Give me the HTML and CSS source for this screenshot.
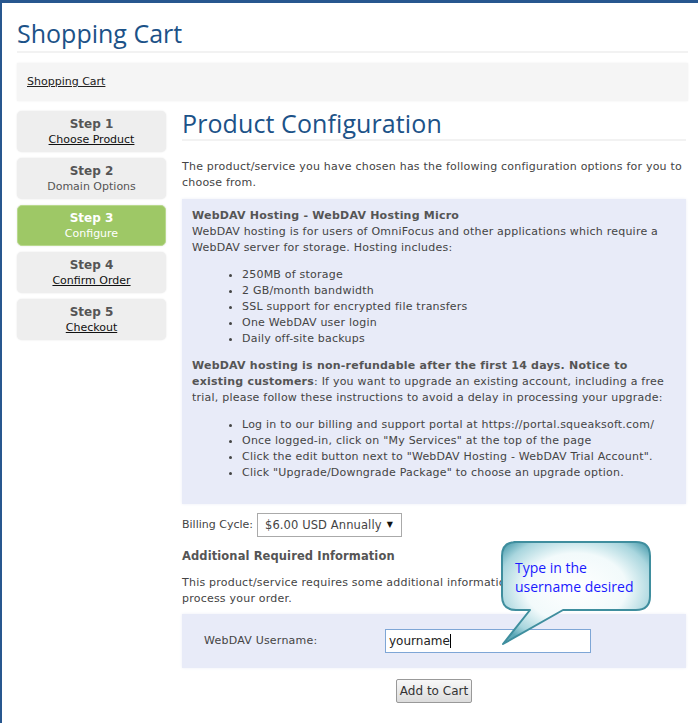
FILE: index.html
```html
<!DOCTYPE html>
<html>
<head>
<meta charset="utf-8">
<link rel="stylesheet" href="styles.css">
</head>
<body>
<div class="frame">
  <h1 class="page-title">Shopping Cart</h1>
  <div class="breadcrumb"><a href="#">Shopping Cart</a></div>
  <div class="layout">
    <nav class="steps">
      <div class="step"><b>Step 1</b><a href="#">Choose Product</a></div>
      <div class="step"><b>Step 2</b><span>Domain Options</span></div>
      <div class="step active"><b>Step 3</b><span>Configure</span></div>
      <div class="step"><b>Step 4</b><a href="#">Confirm Order</a></div>
      <div class="step"><b>Step 5</b><a href="#">Checkout</a></div>
    </nav>
    <main class="main">
      <h2 class="section-title">Product Configuration</h2>
      <p class="intro">The product/service you have chosen has the following configuration options for you to choose from.</p>
      <div class="infobox">
        <div class="prod-name">WebDAV Hosting - WebDAV Hosting Micro</div>
        <div>WebDAV hosting is for users of OmniFocus and other applications which require a WebDAV server for storage. Hosting includes:</div>
        <ul>
          <li>250MB of storage</li>
          <li>2 GB/month bandwidth</li>
          <li>SSL support for encrypted file transfers</li>
          <li>One WebDAV user login</li>
          <li>Daily off-site backups</li>
        </ul>
        <p><b>WebDAV hosting is non-refundable after the first 14 days. Notice to existing customers</b>: If you want to upgrade an existing account, including a free trial, please follow these instructions to avoid a delay in processing your upgrade:</p>
        <ul>
          <li>Log in to our billing and support portal at https://portal.squeaksoft.com/</li>
          <li>Once logged-in, click on "My Services" at the top of the page</li>
          <li>Click the edit button next to "WebDAV Hosting - WebDAV Trial Account".</li>
          <li>Click "Upgrade/Downgrade Package" to choose an upgrade option.</li>
        </ul>
      </div>
      <div class="billing">
        <span>Billing Cycle:</span>
        <div class="select"><span>$6.00 USD Annually</span><span class="arrow">&#9660;</span></div>
      </div>
      <div class="add-title">Additional Required Information</div>
      <p class="add-text">This product/service requires some additional information from you to allow us to process your order.</p>
      <div class="fieldbox">
        <label class="field-label">WebDAV Username:</label>
        <div class="input">yourname<span class="caret"></span></div>
      </div>
      <div class="actions"><button class="btn">Add to Cart</button></div>
    </main>
  </div>
  <div class="callout">
    <svg width="160" height="110" viewBox="0 0 160 110">
      <defs>
        <radialGradient id="g" cx="0.5" cy="0.45" r="0.62">
          <stop offset="0" stop-color="#ffffff"/>
          <stop offset="0.55" stop-color="#f2fafb"/>
          <stop offset="0.85" stop-color="#a9d6de"/>
          <stop offset="1" stop-color="#5fa9b8"/>
        </radialGradient>
      </defs>
      <path d="M14 2 H136 Q150 2 150 16 V56 Q150 70 136 70 H63 L3 104 L30 70 H16 Q2 70 2 56 V16 Q2 2 16 2 Z" fill="url(#g)" stroke="#3f8e9e" stroke-width="2" stroke-linejoin="round"/>
    </svg>
    <div class="callout-text">Type in the<br>username desired</div>
  </div>
</div>
</body>
</html>
```
FILE: styles.css
```css
html, body { margin: 0; padding: 0; background: #fff; }
body { font-family: "DejaVu Sans", Verdana, sans-serif; font-size: 11px; line-height: 16px; color: #444; letter-spacing: 0.22px; }
.frame {
  position: relative;
  border-top: 3px solid #28578f;
  border-left: 2px solid #28578f;
  min-height: 723px;
  box-sizing: border-box;
  padding: 0 10px 0 15px;
}
.page-title {
  margin: 0;
  padding: 17px 0 5px 0;
  font-family: "Open Sans", sans-serif;
  font-weight: 400;
  font-size: 25px;
  line-height: 26px;
  letter-spacing: 0;
  color: #1c5288;
  border-bottom: 2px solid #f2f2f2;
}
.breadcrumb {
  margin-top: 10px;
  background: #f5f5f5;
  height: 38px;
  display: flex;
  align-items: center;
  padding-left: 10px;
  box-shadow: 0 0 2px #f0f0f0;
}
.breadcrumb a { color: #222; text-decoration: underline; letter-spacing: 0; }
.layout { display: flex; gap: 16px; margin-top: 10px; }
.steps { width: 149px; flex: none; display: flex; flex-direction: column; gap: 6px; letter-spacing: 0; }
.step {
  background: #eeeeee;
  border-radius: 5px;
  height: 41px;
  display: flex;
  flex-direction: column;
  align-items: center;
  justify-content: center;
  color: #555;
  box-shadow: 0 0 2px #e4e4e4;
}
.step b { font-size: 12px; color: #555; }
.step a { color: #111; text-decoration: underline; }
.step.active { background: #9ec866; color: #fff; border: 1px solid #b9d98e; box-sizing: border-box; }
.step.active b { color: #fff; }
.main { flex: 1; padding-right: 2px; }
.section-title {
  margin: 0;
  padding: 0 0 3px 0;
  font-family: "Open Sans", sans-serif;
  font-weight: 400;
  font-size: 25px;
  line-height: 25px;
  letter-spacing: 0.1px;
  color: #1c5288;
  border-bottom: 2px solid #f2f2f2;
}
.intro { margin: 18px 0 8px 0; }
.infobox {
  background: #e8ebf8;
  padding: 9px 10px 12px 10px;
  box-shadow: 0 0 3px #eceef6;
}
.prod-name { font-weight: bold; color: #555; }
.infobox ul { margin: 11px 0 11px 0; padding-left: 50px; list-style: disc; }
.infobox p { margin: 0; }
.infobox b { color: #555; }
.billing { display: flex; align-items: center; gap: 4px; margin-top: 9px; letter-spacing: 0; }
.select {
  display: flex; align-items: center; justify-content: space-between;
  width: 145px; height: 24px; box-sizing: border-box;
  border: 1px solid #aaa; padding: 0 8px 0 7px; font-size: 11.5px; color: #444; background: #fff;
  letter-spacing: 0.1px;
}
.arrow { font-size: 8px; color: #111; }
.add-title { font-weight: bold; font-size: 11.5px; margin-top: 11px; color: #555; letter-spacing: 0.1px; }
.add-text { margin: 11px 0 7px 0; }
.fieldbox {
  background: #e8ebf8;
  height: 54px;
  display: flex;
  align-items: center;
  padding-left: 22px;
  box-shadow: 0 0 3px #eceef6;
}
.field-label { width: 181px; }
.input {
  width: 206px; height: 24px; box-sizing: border-box;
  border: 1px solid #7ea6d6; background: #fff;
  padding-left: 3px; color: #222; font-size: 12px; line-height: 22px; letter-spacing: 0;
  display: flex; align-items: center;
}
.caret { display: inline-block; width: 1px; height: 14px; background: #000; }
.actions { display: flex; justify-content: center; margin-top: 11px; }
.btn {
  font-family: "DejaVu Sans", sans-serif; font-size: 12px; color: #333;
  height: 24px; padding: 0 3px;
  border: 1px solid #999; border-radius: 2px;
  background: linear-gradient(#f8f8f8, #dcdcdc);
}
.callout { position: absolute; left: 498px; top: 537px; width: 160px; height: 110px; }
.callout svg { position: absolute; left: 0; top: 0; }
.callout-text {
  position: absolute; left: 15px; top: 18px;
  font-family: "Open Sans", sans-serif; font-size: 14px; line-height: 19px; color: #1a1aff; letter-spacing: 0;
}
```
